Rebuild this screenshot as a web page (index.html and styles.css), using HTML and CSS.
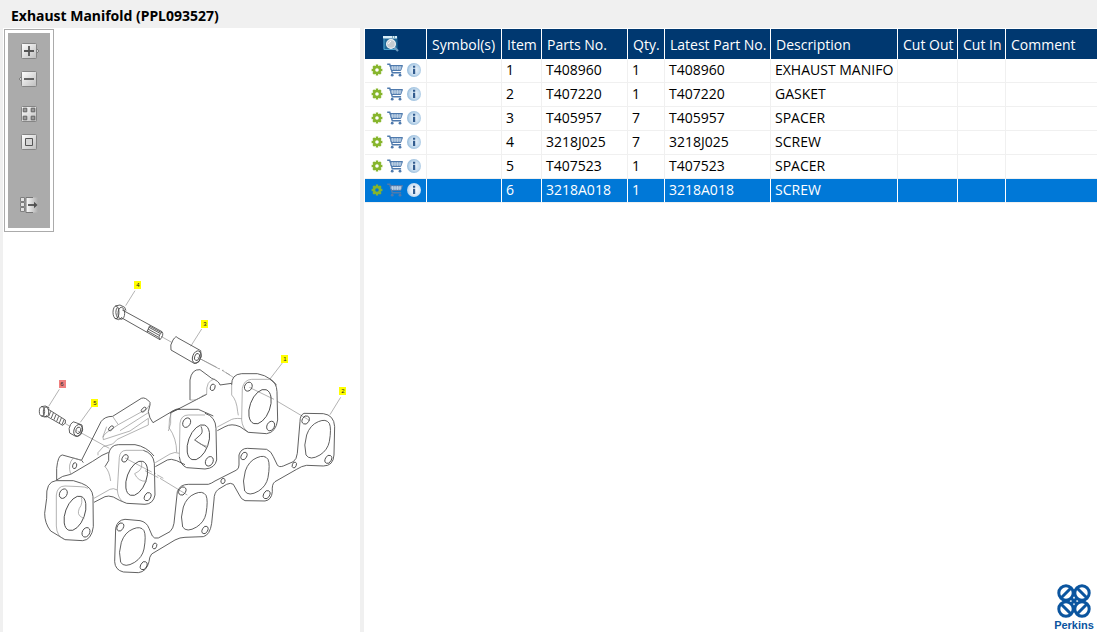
FILE: index.html
```html
<!DOCTYPE html>
<html lang="en">
<head>
<meta charset="utf-8">
<title>Exhaust Manifold (PPL093527)</title>
<link rel="stylesheet" href="styles.css">
</head>
<body>
<svg class="defs" aria-hidden="true">
  <defs>
    <linearGradient id="face" x1="0" y1="0" x2="1" y2="1"><stop offset="0" stop-color="#fff"/><stop offset="1" stop-color="#bdbdbd"/></linearGradient>
    <linearGradient id="fade"><stop offset="0" stop-color="#fff"/><stop offset="1" stop-color="#ababab"/></linearGradient>
    <radialGradient id="ball" cx=".55" cy=".5" r=".6"><stop offset="0" stop-color="#edf5fb"/><stop offset=".55" stop-color="#c8ddef"/><stop offset="1" stop-color="#86b1d5"/></radialGradient>
    <radialGradient id="ball-on" cx=".55" cy=".5" r=".6"><stop offset="0" stop-color="#fff"/><stop offset=".6" stop-color="#dbe9f6"/><stop offset="1" stop-color="#a5c8e8"/></radialGradient>
    <symbol id="gear" viewBox="0 0 12 12">
      <path d="M6 .6v10.8M.6 6h10.8M2.2 2.2l7.6 7.6M9.8 2.2l-7.6 7.6" stroke="#86b52c" stroke-width="2.4"/>
      <circle cx="6" cy="6" r="3" class="gear-hole" stroke="#86b52c" stroke-width="2.4"/>
    </symbol>
    <symbol id="cart" viewBox="0 0 16 14">
      <path d="M.2 1.2h2.6l2.5 8.5h8.8" fill="none" stroke="#4f7aad" stroke-width="1.4"/>
      <path d="M3 2.5h12.5l-1.8 5H4.5z" fill="#88a8cc" stroke="#4f7aad"/>
      <path d="M5.5 3v4M8 3v4M10.5 3v4M13 3v4M3.5 5h11" stroke="#d4e1ef" stroke-width=".6"/>
      <circle cx="5.2" cy="12.2" r="1.4" fill="#4f7aad"/><circle cx="13" cy="12.2" r="1.4" fill="#4f7aad"/>
    </symbol>
    <symbol id="info" viewBox="0 0 14 14">
      <circle cx="7" cy="7" r="7" class="info-ball"/>
      <path d="M6 5.7h2.2V11H6zM6 2.8h2.2v1.9H6z" fill="#325c8f"/>
    </symbol>
  </defs>
</svg>

<header class="title-bar"><h1 class="title">Exhaust Manifold (PPL093527)</h1></header>
<main class="workspace">
  <section class="viewer" aria-label="Illustration">
    <div class="toolbar" role="toolbar" aria-label="Illustration tools">
      <button class="tool" aria-label="Zoom in"><svg viewBox="0 0 18 16"><path d="M15 5 17.8 8 15 11z" fill="#e4e4e4" stroke="#777"/><rect x=".5" y=".5" width="15" height="15" rx="1" fill="url(#face)" stroke="#858585"/><path d="M8 3v10M3 8h10" stroke="#555" stroke-width="1.8"/></svg></button>
      <button class="tool" aria-label="Zoom out"><svg viewBox="0 0 18 16"><path d="M1 5-1.8 8 1 11z" fill="#e4e4e4" stroke="#777"/><rect x=".5" y=".5" width="15" height="15" rx="1" fill="url(#face)" stroke="#858585"/><path d="M3 8h10" stroke="#555" stroke-width="1.8"/></svg></button>
      <button class="tool tool-group" aria-label="Fit to window"><svg viewBox="0 0 18 16"><rect x=".5" y=".5" width="15" height="15" rx="1" fill="url(#face)" stroke="#858585"/><path d="M2.2 2.2h3.6v3.6H2.2zM10.2 2.2h3.6v3.6h-3.6zM2.2 10.2h3.6v3.6H2.2zM10.2 10.2h3.6v3.6h-3.6z" fill="#999" stroke="#626262"/></svg></button>
      <button class="tool" aria-label="Actual size"><svg viewBox="0 0 18 16"><rect x=".5" y=".5" width="15" height="15" rx="1" fill="url(#face)" stroke="#858585"/><path d="M4.5 4.5h7v7h-7z" fill="#d5d5d5" stroke="#555"/></svg></button>
      <button class="tool tool-last" aria-label="Hide panel"><svg viewBox="0 0 18 16"><rect x="5" y=".5" width="12" height="15" fill="url(#fade)"/><path d="M-.5.5h4v4h-4zM-.5 5.5h4v4h-4zM-.5 10.5h4v4h-4z" fill="#e2e2e2" stroke="#808080"/><path d="M5 .5v15M5 .5h7M5 15.5h7" stroke="#777"/><path d="M7 8h8" stroke="#505050" stroke-width="1.8"/><path d="m13 4.8 3.5 3.2L13 11.2z" fill="#505050"/></svg></button>
    </div>
    <svg class="drawing" viewBox="4 270 355 320" role="img" aria-label="Exploded view of the exhaust manifold">
      <!-- long screw and spacer -->
      <g class="part" transform="translate(100 270) scale(.3333)">
        <path class="lead" d="M105 62 77 107M305 177 272 229M183 199 215 217M292 262 350 292M356 296h4M366 301 390 315"/>
        <ellipse cx="48" cy="127" rx="9" ry="19"/>
        <path d="M46 108 60 105 74 112 78 122M44 145 56 149 66 143M52 112Q42 127 54 146"/>
        <ellipse cx="64" cy="130" rx="10" ry="18"/>
        <path d="M67 120 186 185Q193 195 180 209L64 143M180 209Q172 200 186 186"/>
        <path class="thread" d="M147 172 180 190M144 177 178 196M141 182 176 202M150 169 183 187M149 167 141 186"/>
        <path d="M232 203 302 242Q308 261 297 275 284 284 279 278L213 240Q209 225 219 210T232 203"/>
        <ellipse cx="290" cy="261" rx="12" ry="19" transform="rotate(20 290 261)"/>
        <ellipse cx="291" cy="261" rx="7" ry="11" transform="rotate(20 291 261)"/>
      </g>
      <!-- upper half of the manifold -->
      <g class="part" transform="translate(170 345) scale(.3333)">
        <path class="lead" d="M337 54 300 102M512 157 480 209M88 40 148 72M156 76h5M168 83 190 97M238 127 312 163M322 169 420 227"/>
        <path d="M60 165V105Q65 72 90 74L125 100Q147 108 150 120L185 115M0 205 110 148"/>
        <path class="thin" d="M60 165Q80 168 98 152L110 148Q107 105 135 102"/>
        <ellipse class="small" cx="128" cy="127" rx="7" ry="10" transform="rotate(20 128 127)"/>
        <path d="M185 120Q184 88 215 86H262Q285 90 302 103L320 120"/>
        <path class="thin" d="M185 120V150Q200 165 203 200L205 211"/>
        <path class="thin" d="M235 262Q217 250 215 225L217 130Q222 104 245 103H300"/>
        <path d="M300 103Q320 112 321 140L323 225Q318 262 290 266L235 262 210 245Q185 234 165 245L142 257"/>
        <path class="thin" d="M142 246 178 227Q190 218 215 221"/>
        <ellipse cx="270" cy="185" rx="30" ry="54" transform="rotate(20 270 185)"/>
        <ellipse cx="235" cy="125" rx="11" ry="14" transform="rotate(28 235 125)"/>
        <ellipse cx="302" cy="243" rx="11" ry="15" transform="rotate(28 302 243)"/>
        <path d="M0 205Q12 192 35 193H85L130 213M50 368Q31 360 28 335"/>
        <path class="thin" d="M5 200Q-4 220-3 248 20 280 20 322"/>
        <path class="thin" d="M28 335 30 235Q33 210 55 210H105"/>
        <path d="M105 205Q137 215 138 250L140 345Q135 370 105 372L50 368"/>
        <ellipse cx="85" cy="292" rx="30" ry="55" transform="rotate(20 85 292)"/>
        <path d="M93 244Q100 260 93 268L74 285 108 307"/>
        <path class="thin" d="M74 285Q90 301 112 304"/>
        <ellipse cx="50" cy="233" rx="11" ry="15" transform="rotate(28 50 233)"/>
        <ellipse cx="118" cy="349" rx="11" ry="15" transform="rotate(28 118 349)"/>
      </g>
      <!-- short screw, washer and heat-shield bracket -->
      <g class="part" transform="translate(30 370) scale(.3333)">
        <path class="lead" d="M88 58 56 109M185 110 151 157M105 160 120 169M143 183 238 235M285 264 365 306M372 310h5M382 315 400 325"/>
        <ellipse cx="36" cy="124" rx="8" ry="14"/>
        <path d="M34 110 46 108 58 114M34 138 44 141 51 137"/>
        <ellipse cx="48" cy="126" rx="8" ry="15"/>
        <path d="M52 116 106 150Q110 160 98 166L49 138"/>
        <path class="thread" d="M62 124 56 139M70 129 64 144M78 134 72 149M86 139 80 154M94 144 88 159M102 149 96 164"/>
        <path d="M135 157 156 165Q162 180 152 194 142 203 135 198L119 189Q114 175 122 163T135 157"/>
        <ellipse cx="144" cy="181" rx="12" ry="18" transform="rotate(20 144 181)"/>
        <ellipse cx="145" cy="181" rx="7" ry="10" transform="rotate(20 145 181)"/>
        <path d="M155 270 213 155Q224 139 248 139L334 85Q346 80 360 97V105L355 125Q358 146 369 158L430 122Q440 116 450 116"/>
        <path class="thin" d="M360 103 350 117 265 164Q255 150 248 139M265 164 235 184Q216 196 220 209L300 183 355 145M218 202 230 170M355 128 270 182"/>
        <path class="thin" d="M355 145V165L262 208 248 222 220 230 204 248M204 248V256"/>
        <ellipse class="small" cx="243" cy="175" rx="5" ry="9" transform="rotate(45 243 175)"/>
        <ellipse class="small" cx="341" cy="119" rx="5" ry="9" transform="rotate(45 341 119)"/>
        <path class="thin" d="M422 132V160L415 183M376 278 420 252Q435 244 448 250"/>
        <path d="M376 290 412 270Q422 265 440 272L465 284"/>
      </g>
      <!-- lower half of the manifold -->
      <g class="part" transform="translate(30 440) scale(.3333)">
        <path d="M80 120V85Q84 45 97 45L155 61M80 120Q95 107 122 103L188 64 216 46 236 37M155 61 160 68"/>
        <path class="thin" d="M130 54Q112 72 122 103M130 54 155 61"/>
        <ellipse class="small" cx="134" cy="77" rx="6" ry="9" transform="rotate(15 134 77)"/>
        <path d="M236 42Q241 15 265 14H315Q350 20 372 48M236 42V62L225 80"/>
        <path class="thin" d="M225 80Q238 92 242 123M262 150 268 52Q270 32 288 31H340"/>
        <path d="M340 31Q370 40 373 70L375 165Q370 192 345 193L290 190Q268 182 250 171 235 166 225 170L192 187"/>
        <path class="thin" d="M192 175 240 148Q250 143 262 150 264 175 278 184"/>
        <ellipse cx="320" cy="115" rx="29" ry="54" transform="rotate(20 320 115)"/>
        <path class="thin" d="M333 62Q340 82 326 94L314 101Q324 125 350 124"/>
        <ellipse cx="285" cy="55" rx="8" ry="12" transform="rotate(28 285 55)"/>
        <ellipse cx="353" cy="170" rx="9" ry="13" transform="rotate(28 353 170)"/>
        <path d="M50 175Q47 125 78 122H130L155 130Q187 142 189 170L190 260Q185 300 158 302L105 299 62 273Q44 250 44 220L50 175"/>
        <path class="thin" d="M105 299Q80 290 79 258V165Q82 138 105 138L150 140Q165 140 174 145"/>
        <ellipse cx="135" cy="220" rx="29" ry="54" transform="rotate(20 135 220)"/>
        <path class="thin" d="M153 168Q160 190 148 205 140 224 154 231L163 236"/>
        <ellipse cx="100" cy="161" rx="11" ry="15" transform="rotate(28 100 161)"/>
        <ellipse cx="168" cy="277" rx="11" ry="15" transform="rotate(28 168 277)"/>
      </g>
      <!-- gasket -->
      <g class="part" transform="translate(160 400) scale(.3333)">
        <path class="lead" d="M0 235 82 285M-45 212-5 233"/>
        <path d="M432 40 490 41Q522 45 524 80L522 165Q520 198 490 198L440 196Q425 198 410 208L345 245Q335 252 337 275 335 300 315 303L255 302Q243 298 238 285L220 253Q212 247 200 253L175 268Q162 278 162 300L155 370Q150 405 130 410L75 412Q60 412 45 420L-25 462Q-32 470-33 485-40 515-65 518L-110 516Q-135 510-136 485L-133 385Q-128 360-105 358L-60 362Q-40 366-33 385L-23 408Q-18 417-5 414L30 395Q40 385 42 370L52 275Q60 253 85 253H145Q155 250 165 243L230 210Q237 205 237 195V165Q243 145 262 145L320 148Q335 155 340 170L352 195Q357 203 370 198L400 185Q410 178 412 160L420 65Q420 45 432 40Z"/>
        <path d="M508 70Q515 85 508 125 503 150 480 165 450 183 438 165 430 135 440 105 450 75 475 65 498 55 508 70Z"/>
        <path d="M324 178Q331 193 324 233 319 258 296 273 266 291 254 273 246 243 256 213 266 183 291 173 314 163 324 178Z"/>
        <path d="M138 286Q145 301 138 341 133 366 110 381 80 399 68 381 60 351 70 321 80 291 105 281 128 271 138 286Z"/>
        <path d="M-48 392Q-41 407-48 447-53 472-76 487-106 505-118 487-126 457-116 427-106 397-81 387-58 377-48 392Z"/>
        <ellipse cx="437" cy="60" rx="10" ry="13" transform="rotate(28 437 60)"/><ellipse cx="505" cy="178" rx="9" ry="13" transform="rotate(28 505 178)"/>
        <ellipse cx="252" cy="168" rx="8" ry="12" transform="rotate(28 252 168)"/><ellipse cx="320" cy="284" rx="9" ry="13" transform="rotate(28 320 284)"/>
        <ellipse cx="67" cy="273" rx="10" ry="13" transform="rotate(28 67 273)"/><ellipse cx="135" cy="390" rx="8" ry="12" transform="rotate(28 135 390)"/>
        <ellipse cx="-119" cy="381" rx="9" ry="13" transform="rotate(28 -119 381)"/><ellipse cx="-49" cy="497" rx="9" ry="13" transform="rotate(28 -49 497)"/>
        <ellipse cx="403" cy="195" rx="6" ry="9" transform="rotate(20 403 195)"/><ellipse cx="189" cy="243" rx="6" ry="8" transform="rotate(20 189 243)"/><ellipse cx="-16" cy="438" rx="6" ry="9" transform="rotate(20 -16 438)"/>
      </g>
      <g class="callouts">
        <rect x="134" y="281" width="7" height="8"/><text x="138" y="287">4</text>
        <rect x="201" y="320" width="7" height="8"/><text x="205" y="326">3</text>
        <rect x="281" y="355" width="7" height="8"/><text x="285" y="361">1</text>
        <rect x="339" y="387" width="7" height="8"/><text x="343" y="393">2</text>
        <rect x="91" y="399" width="7" height="8"/><text x="95" y="405">5</text>
        <rect class="active" x="59" y="380" width="7" height="8"/><text x="62" y="386">6</text>
      </g>
    </svg>
  </section>

  <section class="parts">
    <table class="parts-table">
      <colgroup><col class="c-actions"><col class="c-symbol"><col class="c-item"><col class="c-part"><col class="c-qty"><col class="c-latest"><col class="c-desc"><col class="c-out"><col class="c-in"><col></colgroup>
      <thead><tr>
        <th class="find"><button aria-label="Search parts"><svg width="17" height="16" viewBox="0 0 17 16"><path d="M.5.5h14v13H.5z" fill="#1d6796"/><path d="M0 0h14v2.5H0z" fill="#d8edf8"/><path d="M9 1h1M11 1h1" stroke="#267"/><path d="M1 3v10.5h12" stroke="#4aa3cf" fill="none"/><path d="m11 11 4 4" stroke="#6f9dc2" stroke-width="2.2"/><circle cx="8" cy="8" r="4.4" fill="#c4cbd0" stroke="#eef2f5" stroke-width="1.2"/><path d="M5.5 8Q6 5.5 8 5.4" stroke="#fff" fill="none"/></svg></button></th>
        <th>Symbol(s)</th><th>Item</th><th>Parts No.</th><th>Qty.</th><th>Latest Part No.</th><th>Description</th><th>Cut Out</th><th>Cut In</th><th>Comment</th>
      </tr></thead>
      <tbody id="rows"></tbody>
    </table>
    <footer class="brand">
      <svg class="brand-mark" viewBox="0 0 34 34" aria-hidden="true"><g fill="none" stroke="#0b559f" stroke-width="3"><circle cx="9" cy="9" r="7.2"/><circle cx="25" cy="9" r="7.2"/><circle cx="9" cy="25" r="7.2"/><circle cx="25" cy="25" r="7.2"/><path d="M4 14 14 4M20 4l10 10M4 20l10 10M20 30l10-10M14 14l6 6M20 14l-6 6"/></g></svg>
      <span class="brand-name">Perkins</span>
    </footer>
  </section>
</main>
<script src="rows.js"></script>
</body>
</html>
```
FILE: styles.css
```css
* { box-sizing: border-box; }
body {
  margin: 0;
  min-height: 100vh;
  display: flex;
  flex-direction: column;
  background: #f0f0f0;
  color: #000;
  font: 14px/20px "Open Sans", "Noto Sans", sans-serif;
}
button { appearance: none; border: 0; padding: 0; background: none; display: block; cursor: pointer; }
button svg { display: block; overflow: visible; }
.defs { position: absolute; width: 0; height: 0; }
.title-bar { height: 28px; padding: 6px 11px 0; }
.title { margin: 0; font: bold 14px/20px "Noto Sans", sans-serif; }
.workspace { flex: 1; display: grid; grid-template-columns: minmax(0, 357fr) minmax(0, 733fr); gap: 4px; padding-left: 3px; }
.viewer { background: #fff; padding: 1px; display: flex; flex-direction: column; align-items: flex-start; }
.toolbar {
  width: 50px;
  padding: 13px 16px 18px;
  border: 1px solid #ababab;
  outline: 3px solid #fff;
  outline-offset: -4px;
  background: #ababab;
}
.tool { width: 18px; height: 16px; margin-bottom: 12px; }
.tool svg { width: 18px; height: 16px; }
.tool-group { margin-top: 19px; }
.tool-last { margin: 47px 0 0; }
.drawing { width: 100%; margin-top: 38px; }
.part { fill: none; stroke: #484848; stroke-width: 2.6; stroke-linejoin: round; }
.part .thin { stroke: #8c8c8c; stroke-width: 2; }
.part .lead { stroke: #8c8c8c; stroke-width: 2; }
.callouts rect { fill: #ff0; }
.callouts .active { fill: #f08080; }
.callouts text { font: 6px "Liberation Sans", Arial, sans-serif; text-anchor: middle; fill: #222; }

.parts { background: #fff; padding: 1px 0 0 1px; display: flex; flex-direction: column; justify-content: space-between; }
.parts-table { width: 100%; table-layout: fixed; border-collapse: separate; border-spacing: 0; }
.c-actions { width: 62px; }
.c-symbol { width: 75px; }
.c-item { width: 40px; }
.c-part { width: 86px; }
.c-qty { width: 37px; }
.c-latest { width: 106px; }
.c-desc { width: 127px; }
.c-out { width: 60px; }
.c-in { width: 48px; }
th {
  height: 30px;
  padding: 2px 0 0 5px;
  background: #003870;
  color: #fff;
  border-right: 1px solid #fff;
  font-weight: 400;
  text-align: left;
  white-space: nowrap;
}
th.find { padding: 0 0 0 18px; }
td {
  height: 24px;
  padding: 0 0 2px 4px;
  border-right: 1px solid #f0f0f0;
  border-bottom: 1px solid #f0f0f0;
  white-space: nowrap;
  overflow: hidden;
}
th:last-child, td:last-child { border-right: 0; }
td.actions { padding-left: 6px; }
.row-icons { display: flex; align-items: center; gap: 4px; }
.gear { width: 12px; height: 12px; }
.cart { width: 16px; height: 14px; }
.info { width: 14px; height: 14px; }
.gear-hole { fill: #fff; }
.info-ball { fill: url(#ball); }
.selected td { background: #0078d7; color: #fff; border-right-color: #fff; }
.selected .gear { --hole: #0078d7; }
.brand { align-self: flex-end; width: 38px; margin-right: 4px; display: flex; flex-direction: column; align-items: center; color: #0b559f; }
.brand-mark { width: 34px; height: 34px; }
.brand-name { font: bold 11px/14px "Liberation Sans", Arial, sans-serif; }
.gear-hole { fill: var(--hole, #fff); }
.selected .info { --ball: url(#ball-on); }
.info-ball { fill: var(--ball, url(#ball)); }
```
FILE: rows.js
```js
const parts = [
  ["1", "T408960", "1", "EXHAUST MANIFO"],
  ["2", "T407220", "1", "GASKET"],
  ["3", "T405957", "7", "SPACER"],
  ["4", "3218J025", "7", "SCREW"],
  ["5", "T407523", "1", "SPACER"],
  ["6", "3218A018", "1", "SCREW"]
];
const icon = (name, label, part) =>
  `<button class="${name}" aria-label="${label} ${part}"><svg class="${name}"><use href="#${name}"/></svg></button>`;
document.getElementById("rows").innerHTML = parts.map(([item, part, qty, text]) => `
  <tr class="${item === "6" ? "selected" : ""}">
    <td class="actions"><div class="row-icons">${icon("gear", "Configure", part)}${icon("cart", "Order", part)}${icon("info", "Details of", part)}</div></td>
    <td></td><td>${item}</td><td>${part}</td><td>${qty}</td><td>${part}</td><td>${text}</td><td></td><td></td><td></td>
  </tr>`).join("");
```
